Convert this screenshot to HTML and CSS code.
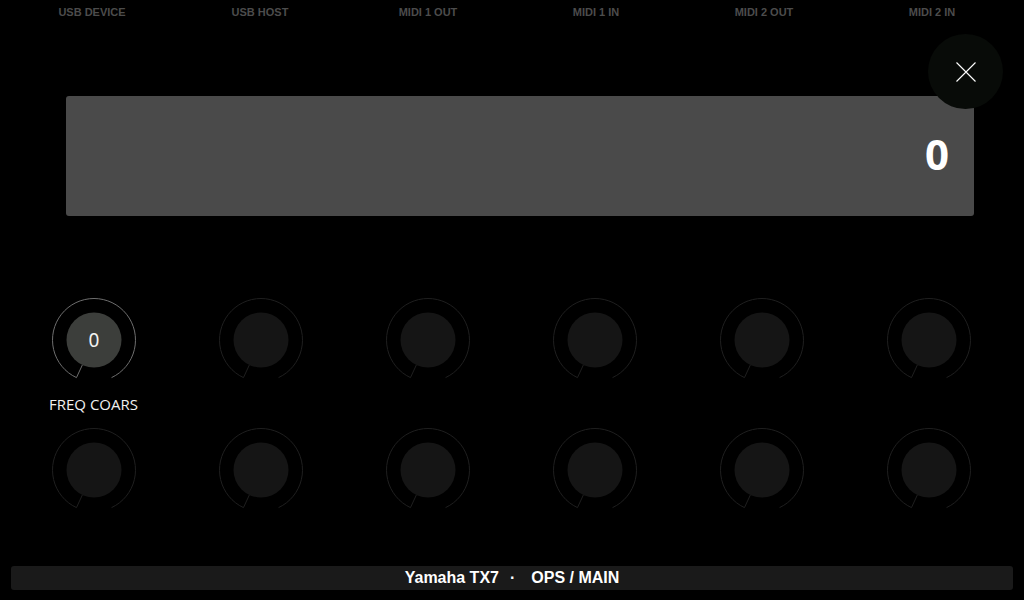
FILE: index.html
```html
<!DOCTYPE html>
<html>
<head>
<meta charset="utf-8">
<link rel="stylesheet" href="styles.css">
</head>
<body>
<div class="screen">
  <div class="ports">
    <div class="port">USB DEVICE</div>
    <div class="port">USB HOST</div>
    <div class="port">MIDI 1 OUT</div>
    <div class="port">MIDI 1 IN</div>
    <div class="port">MIDI 2 OUT</div>
    <div class="port">MIDI 2 IN</div>
  </div>

  <div class="display"><span class="display-value">0</span></div>

  <button class="close" aria-label="Close">
    <svg width="20" height="20" viewBox="0 0 20 20"><path d="M0.5 0.5 L19.5 19.5 M19.5 0.5 L0.5 19.5" stroke="#fff" stroke-width="1.1" fill="none"/></svg>
  </button>

  <div class="knobs">
    <div class="cell">
      <svg class="knob active" width="84" height="84" viewBox="0 0 84 84">
        <path class="ring" d="M24.46 79.61 A41.5 41.5 0 1 1 59.54 79.61"/>
        <path class="ring" d="M30.38 66.92 L24.46 79.61"/>
        <circle class="cap" cx="42" cy="42" r="27.5"/>
        <text class="knob-val" x="42" y="49">0</text>
      </svg>
      <div class="label">FREQ COARS</div>
    </div>
    <div class="cell"><svg class="knob" width="84" height="84" viewBox="0 0 84 84"><path class="ring" d="M24.46 79.61 A41.5 41.5 0 1 1 59.54 79.61"/><path class="ring" d="M30.38 66.92 L24.46 79.61"/><circle class="cap" cx="42" cy="42" r="27.5"/></svg></div>
    <div class="cell"><svg class="knob" width="84" height="84" viewBox="0 0 84 84"><path class="ring" d="M24.46 79.61 A41.5 41.5 0 1 1 59.54 79.61"/><path class="ring" d="M30.38 66.92 L24.46 79.61"/><circle class="cap" cx="42" cy="42" r="27.5"/></svg></div>
    <div class="cell"><svg class="knob" width="84" height="84" viewBox="0 0 84 84"><path class="ring" d="M24.46 79.61 A41.5 41.5 0 1 1 59.54 79.61"/><path class="ring" d="M30.38 66.92 L24.46 79.61"/><circle class="cap" cx="42" cy="42" r="27.5"/></svg></div>
    <div class="cell"><svg class="knob" width="84" height="84" viewBox="0 0 84 84"><path class="ring" d="M24.46 79.61 A41.5 41.5 0 1 1 59.54 79.61"/><path class="ring" d="M30.38 66.92 L24.46 79.61"/><circle class="cap" cx="42" cy="42" r="27.5"/></svg></div>
    <div class="cell"><svg class="knob" width="84" height="84" viewBox="0 0 84 84"><path class="ring" d="M24.46 79.61 A41.5 41.5 0 1 1 59.54 79.61"/><path class="ring" d="M30.38 66.92 L24.46 79.61"/><circle class="cap" cx="42" cy="42" r="27.5"/></svg></div>

    <div class="cell"><svg class="knob" width="84" height="84" viewBox="0 0 84 84"><path class="ring" d="M24.46 79.61 A41.5 41.5 0 1 1 59.54 79.61"/><path class="ring" d="M30.38 66.92 L24.46 79.61"/><circle class="cap" cx="42" cy="42" r="27.5"/></svg></div>
    <div class="cell"><svg class="knob" width="84" height="84" viewBox="0 0 84 84"><path class="ring" d="M24.46 79.61 A41.5 41.5 0 1 1 59.54 79.61"/><path class="ring" d="M30.38 66.92 L24.46 79.61"/><circle class="cap" cx="42" cy="42" r="27.5"/></svg></div>
    <div class="cell"><svg class="knob" width="84" height="84" viewBox="0 0 84 84"><path class="ring" d="M24.46 79.61 A41.5 41.5 0 1 1 59.54 79.61"/><path class="ring" d="M30.38 66.92 L24.46 79.61"/><circle class="cap" cx="42" cy="42" r="27.5"/></svg></div>
    <div class="cell"><svg class="knob" width="84" height="84" viewBox="0 0 84 84"><path class="ring" d="M24.46 79.61 A41.5 41.5 0 1 1 59.54 79.61"/><path class="ring" d="M30.38 66.92 L24.46 79.61"/><circle class="cap" cx="42" cy="42" r="27.5"/></svg></div>
    <div class="cell"><svg class="knob" width="84" height="84" viewBox="0 0 84 84"><path class="ring" d="M24.46 79.61 A41.5 41.5 0 1 1 59.54 79.61"/><path class="ring" d="M30.38 66.92 L24.46 79.61"/><circle class="cap" cx="42" cy="42" r="27.5"/></svg></div>
    <div class="cell"><svg class="knob" width="84" height="84" viewBox="0 0 84 84"><path class="ring" d="M24.46 79.61 A41.5 41.5 0 1 1 59.54 79.61"/><path class="ring" d="M30.38 66.92 L24.46 79.61"/><circle class="cap" cx="42" cy="42" r="27.5"/></svg></div>
  </div>

  <div class="status">
    <span class="dev">Yamaha TX7</span><span class="sep">·</span><span class="page">OPS / MAIN</span>
  </div>
</div>
</body>
</html>
```

FILE: styles.css
```css
html, body {
  margin: 0;
  padding: 0;
  background: #000;
}

.screen {
  position: relative;
  width: 1024px;
  height: 600px;
  background: #000;
  overflow: hidden;
  display: flex;
  flex-direction: column;
}

.ports {
  display: grid;
  grid-template-columns: repeat(6, 168px);
  padding-left: 8px;
  height: 24px;
}

.port {
  text-align: center;
  font-family: "Liberation Sans", Arial, sans-serif;
  font-weight: bold;
  font-size: 11px;
  line-height: 24px;
  color: #4c4c4c;
}

.display {
  margin: 72px 50px 0 66px;
  height: 120px;
  box-sizing: border-box;
  background: #4a4a4a;
  border-radius: 3px;
  display: flex;
  align-items: center;
  justify-content: flex-end;
  padding: 0 25px 4px 0;
}

.display-value {
  font-family: "Open Sans", "Noto Sans", sans-serif;
  font-weight: bold;
  font-size: 42px;
  line-height: 1;
  color: #fff;
}

.close {
  position: absolute;
  left: 928px;
  top: 34px;
  width: 75px;
  height: 75px;
  border: 0;
  padding: 0;
  border-radius: 50%;
  background: #080b08;
  display: flex;
  align-items: center;
  justify-content: center;
}

.close svg {
  display: block;
}

.knobs {
  display: grid;
  grid-template-columns: repeat(6, 167px);
  grid-auto-rows: 130px;
  padding-left: 10px;
  margin-top: 82px;
}

.cell {
  display: flex;
  flex-direction: column;
  align-items: center;
}

.knob {
  display: block;
  flex: none;
}

.knob .ring {
  fill: none;
  stroke: #1f1f1f;
  stroke-width: 1;
}

.knob .cap {
  fill: #151515;
}

.knob.active .ring {
  stroke: #6e6e6e;
}

.knob.active .cap {
  fill: #3c3e3b;
}

.knob-val {
  font-family: "Noto Sans", "Open Sans", sans-serif;
  font-size: 19px;
  fill: #f2f2f2;
  text-anchor: middle;
}

.label {
  margin-top: 12px;
  font-family: "Open Sans", "Noto Sans", sans-serif;
  font-size: 15px;
  line-height: 20px;
  color: #f0f0f0;
  white-space: nowrap;
}

.status {
  margin: auto 11px 10px 11px;
  height: 24px;
  background: #1a1a1a;
  border-radius: 3px;
  display: flex;
  align-items: center;
  justify-content: center;
  font-family: "Liberation Sans", Arial, sans-serif;
  font-weight: bold;
  font-size: 16px;
  color: #fff;
}

.sep {
  margin: 0 16px 0 11px;
}
```
